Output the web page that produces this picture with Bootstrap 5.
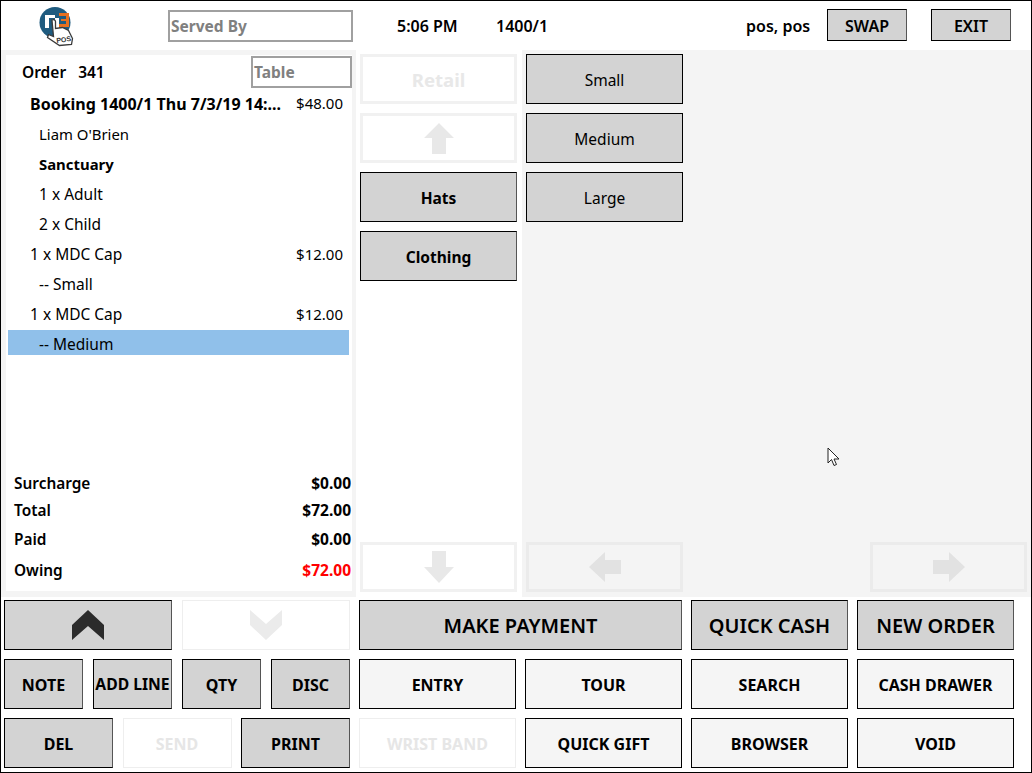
<!DOCTYPE html>
<html lang="en">
<head>
<meta charset="utf-8">
<title>POS</title>
<link href="https://cdn.jsdelivr.net/npm/bootstrap@5.3.0/dist/css/bootstrap.min.css" rel="stylesheet">
<style>
html,body{margin:0;background:#fff;overflow:hidden}
body{font-family:"Noto Sans","Open Sans",sans-serif;color:#000;font-size:15px}
.pos-frame{width:1032px;height:773px;border:1px solid #000;position:relative;display:flex;flex-direction:column;background:#fff}
.pos-top{height:49px;flex:none;align-items:center}
.pos-logo{width:39px;height:46px;margin-left:38px;flex:none}
.pos-input{border:2px solid #a0a0a0;height:32px;display:flex;align-items:center;padding:2px 0 0 1px;color:#808080;font-weight:700;font-size:15.5px;line-height:1}
.pos-served{width:185px;margin-left:90px}
.pos-time{font-weight:600;font-size:16px;white-space:nowrap}
.pos-t1{margin-left:44px;width:99px}
.pos-t2{width:250px}
.pos-user{width:81px}
.btn.pos-btn{border-radius:0;border:1px solid #000;border-right-color:#555;background:#d3d3d3;color:#000;padding:2px 0 0;font-weight:700;font-size:16px;line-height:1;display:flex;align-items:center;justify-content:center;white-space:nowrap;flex:none}
.btn.pos-btn:hover{background:#d3d3d3;color:#000;border-color:#000}
.btn.pos-swap{width:80px;height:32px;font-size:16px;font-weight:600;margin-top:-2px;padding-top:2px}
.btn.pos-plain{font-weight:400;border-color:#000;font-size:15.5px;padding-top:3px}
.btn.pos-cat{font-size:15.5px;padding-top:3px}
.btn.pos-light{background:#f5f5f5;border-color:#000}
.btn.pos-off{background:#fff;border:1px solid #eee;color:#e6e6e6}
.btn.pos-ghost{background:transparent;border:3px solid #ebebeb;color:#e4e4e4}
.btn.pos-ghost-w{background:#fff;border:3px solid #f1f1f1;color:#e8e8e8;font-size:18.6px;padding-top:3px}
.btn.pos-lg{font-size:20px;font-weight:600;padding-top:1px}
.btn.pos-b57{width:157px;height:50px}
.btn.pos-ico{padding:0}
.btn.pos-tight{font-size:15.7px}
.pos-main{height:547px;flex:none}
.pos-left{width:355px;flex:none;background:#f4f4f4;padding:5px 4px 6px 5px}
.pos-order{background:#fff;height:100%;display:flex;flex-direction:column;padding:0 0 0 2px}
.pos-orderhead{height:35px;flex:none;position:relative;padding:1px 0 0 14px;font-weight:600;font-size:15.5px;align-items:center;display:flex}
.pos-orderhead b{font-weight:600;margin-right:12px}
.pos-table{width:101px;margin-left:auto;height:32px;margin-top:-2px;margin-right:0}
.pos-rows{height:382px;flex:none}
.pos-row{height:25px;margin-bottom:5px;display:flex;justify-content:space-between;align-items:center;padding:4px 6px 0 22px;width:341px;white-space:nowrap;font-size:15.5px}
.pos-row.pos-sub{padding-left:31px}
.pos-row.pos-sel{background:#90c0ea}
.pos-row.pos-strong{font-weight:700}
.pos-row.pos-big{font-size:16px;padding-top:2px}
.pos-row.pos-narrow{font-size:14.9px}
.pos-price{font-weight:400;font-size:15px}
.pos-sums{flex:1;font-weight:600;font-size:15.4px;line-height:22px;padding:0 1px 0 6px}
.pos-sum{display:flex;justify-content:space-between}
.pos-lab{padding-top:1px}
.pos-amt{font-size:15.5px;font-weight:700}
.pos-red{color:#f00}
.pos-g0{margin-top:0}
.pos-g1{margin-top:4px}
.pos-g2{margin-top:6px}
.pos-g3{margin-top:8px}
.pos-mid{width:166px;flex:none;padding:4px 0 5px 4px;background:#fff}
.pos-right{flex:1;background:#f4f4f4;padding:4px 4px 5px 4px;position:relative}
.pos-col{height:100%;display:flex;flex-direction:column;gap:9px}
.pos-foot{padding:3px 0 0 3px;gap:9px;flex-direction:column;display:flex}
.pos-fr{display:flex;height:50px}
.pos-fl{width:346px;flex:none;display:flex;justify-content:space-between}
.pos-fm{margin-left:9px;display:flex;gap:9px}
.pos-w168{width:168px;height:50px}
.pos-w79{width:79px;height:50px}
.pos-w109{width:109px;height:50px}
.pos-w323{width:323px;height:50px}
.pos-cursor{position:absolute;left:826px;top:446px;width:13px;height:20px}
</style>
</head>
<body>
<div class="pos-frame">
  <div class="pos-top d-flex">
    <svg class="pos-logo" viewBox="0 0 39 46">
      <circle cx="16" cy="19.500" r="15.500" fill="#1f5b7f"/>
      <path d="M6 12h10v3h4v10h-4V15h-6v10H6z" fill="#fff"/>
      <path d="M20 10h10v14h-10v-3h7v-3h-5v-2h5v-3h-7z" fill="#e8701f"/>
      <path d="M13 17c1.500-1 3.500 0 3.500 1.500v7l7-1 6 3 4 8-1 6-12 1-12-8 1-3 5 2-1.500-16z" fill="#fff" stroke="#3a3a3a" stroke-width="1.300"/>
      <text x="25" y="39" font-size="7" font-weight="700" text-anchor="middle" fill="#333" transform="rotate(-8 25 39)" font-family="Liberation Sans,sans-serif">POS</text>
    </svg>
    <div class="pos-input pos-served">Served By</div>
    <div class="pos-time pos-t1">5:06 PM</div>
    <div class="pos-time pos-t2">1400/1</div>
    <div class="pos-time pos-user">pos, pos</div>
    <button class="btn pos-btn pos-swap">SWAP</button>
    <button class="btn pos-btn pos-swap ms-4">EXIT</button>
  </div>
  <div class="pos-main d-flex">
    <div class="pos-left">
      <div class="pos-order">
        <div class="pos-orderhead"><b>Order</b><span>341</span><div class="pos-input pos-table">Table</div></div>
        <div class="pos-rows">
          <div class="pos-row pos-strong pos-big"><span>Booking 1400/1 Thu 7/3/19 14:...</span><span class="pos-price">$48.00</span></div>
          <div class="pos-row pos-sub pos-narrow"><span>Liam O'Brien</span></div>
          <div class="pos-row pos-sub pos-strong pos-narrow"><span>Sanctuary</span></div>
          <div class="pos-row pos-sub"><span>1 x Adult</span></div>
          <div class="pos-row pos-sub"><span>2 x Child</span></div>
          <div class="pos-row"><span>1 x MDC Cap</span><span class="pos-price">$12.00</span></div>
          <div class="pos-row pos-sub"><span>-- Small</span></div>
          <div class="pos-row"><span>1 x MDC Cap</span><span class="pos-price">$12.00</span></div>
          <div class="pos-row pos-sub pos-sel"><span>-- Medium</span></div>
        </div>
        <div class="pos-sums">
          <div class="pos-sum pos-g0"><span class="pos-lab">Surcharge</span><span class="pos-amt">$0.00</span></div>
          <div class="pos-sum pos-g1"><span class="pos-lab">Total</span><span class="pos-amt">$72.00</span></div>
          <div class="pos-sum pos-g2"><span class="pos-lab">Paid</span><span class="pos-amt">$0.00</span></div>
          <div class="pos-sum pos-g3"><span class="pos-lab">Owing</span><span class="pos-amt pos-red">$72.00</span></div>
        </div>
      </div>
    </div>
    <div class="pos-mid">
      <div class="pos-col">
        <button class="btn pos-btn pos-b57 pos-ghost-w">Retail</button>
        <button class="btn pos-btn pos-b57 pos-ghost-w pos-ico"><svg width="32" height="32" viewBox="0 0 32 32"><path d="M16 1 31 16H23V33H9V16H1z" fill="#e8e8e8"/></svg></button>
        <button class="btn pos-btn pos-b57 pos-cat">Hats</button>
        <button class="btn pos-btn pos-b57 pos-cat">Clothing</button>
        <button class="btn pos-btn pos-b57 pos-ghost-w pos-ico mt-auto"><svg width="32" height="32" viewBox="0 0 32 32"><path d="M9 0H23V16H31L16 32 1 16H9z" fill="#e8e8e8"/></svg></button>
      </div>
    </div>
    <div class="pos-right">
      <div class="pos-col">
        <button class="btn pos-btn pos-b57 pos-plain">Small</button>
        <button class="btn pos-btn pos-b57 pos-plain">Medium</button>
        <button class="btn pos-btn pos-b57 pos-plain">Large</button>
        <div class="d-flex justify-content-between mt-auto">
          <button class="btn pos-btn pos-b57 pos-ghost pos-ico"><svg width="32" height="32" viewBox="0 0 32 32"><path d="M0 16 16 1V9H32V23H16V31z" fill="#e2e2e2"/></svg></button>
          <button class="btn pos-btn pos-b57 pos-ghost pos-ico"><svg width="32" height="32" viewBox="0 0 32 32"><path d="M32 16 16 1V9H0V23H16V31z" fill="#e2e2e2"/></svg></button>
        </div>
      </div>
    </div>
  </div>
  <div class="pos-foot">
    <div class="pos-fr">
      <div class="pos-fl">
        <button class="btn pos-btn pos-ico pos-w168"><svg width="34" height="30" viewBox="0 0 34 30"><path d="M17 0 33 15V30L17 16 1 30V15z" fill="#2b2b2b"/></svg></button>
        <button class="btn pos-btn pos-off pos-ico pos-w168"><svg width="34" height="30" viewBox="0 0 34 30"><path d="M1 0 17 14 33 0V15L17 30 1 15z" fill="#ebebeb"/></svg></button>
      </div>
      <div class="pos-fm">
        <button class="btn pos-btn pos-lg pos-w323">MAKE PAYMENT</button>
        <button class="btn pos-btn pos-lg pos-b57">QUICK CASH</button>
        <button class="btn pos-btn pos-lg pos-b57">NEW ORDER</button>
      </div>
    </div>
    <div class="pos-fr">
      <div class="pos-fl">
        <button class="btn pos-btn pos-w79">NOTE</button>
        <button class="btn pos-btn pos-w79 pos-tight">ADD LINE</button>
        <button class="btn pos-btn pos-w79">QTY</button>
        <button class="btn pos-btn pos-w79">DISC</button>
      </div>
      <div class="pos-fm">
        <button class="btn pos-btn pos-light pos-b57">ENTRY</button>
        <button class="btn pos-btn pos-light pos-b57">TOUR</button>
        <button class="btn pos-btn pos-light pos-b57">SEARCH</button>
        <button class="btn pos-btn pos-light pos-b57">CASH DRAWER</button>
      </div>
    </div>
    <div class="pos-fr">
      <div class="pos-fl">
        <button class="btn pos-btn pos-w109">DEL</button>
        <button class="btn pos-btn pos-off pos-w109">SEND</button>
        <button class="btn pos-btn pos-w109">PRINT</button>
      </div>
      <div class="pos-fm">
        <button class="btn pos-btn pos-off pos-b57">WRIST BAND</button>
        <button class="btn pos-btn pos-light pos-b57">QUICK GIFT</button>
        <button class="btn pos-btn pos-light pos-b57">BROWSER</button>
        <button class="btn pos-btn pos-light pos-b57">VOID</button>
      </div>
    </div>
  </div>
  <svg class="pos-cursor" viewBox="0 0 13 20"><path d="M1 1V16L4.500 12.500 7 18.500 9.500 17.500 7 12H12z" fill="#fff" stroke="#222" stroke-width="1"/></svg>
</div>
</body>
</html>
